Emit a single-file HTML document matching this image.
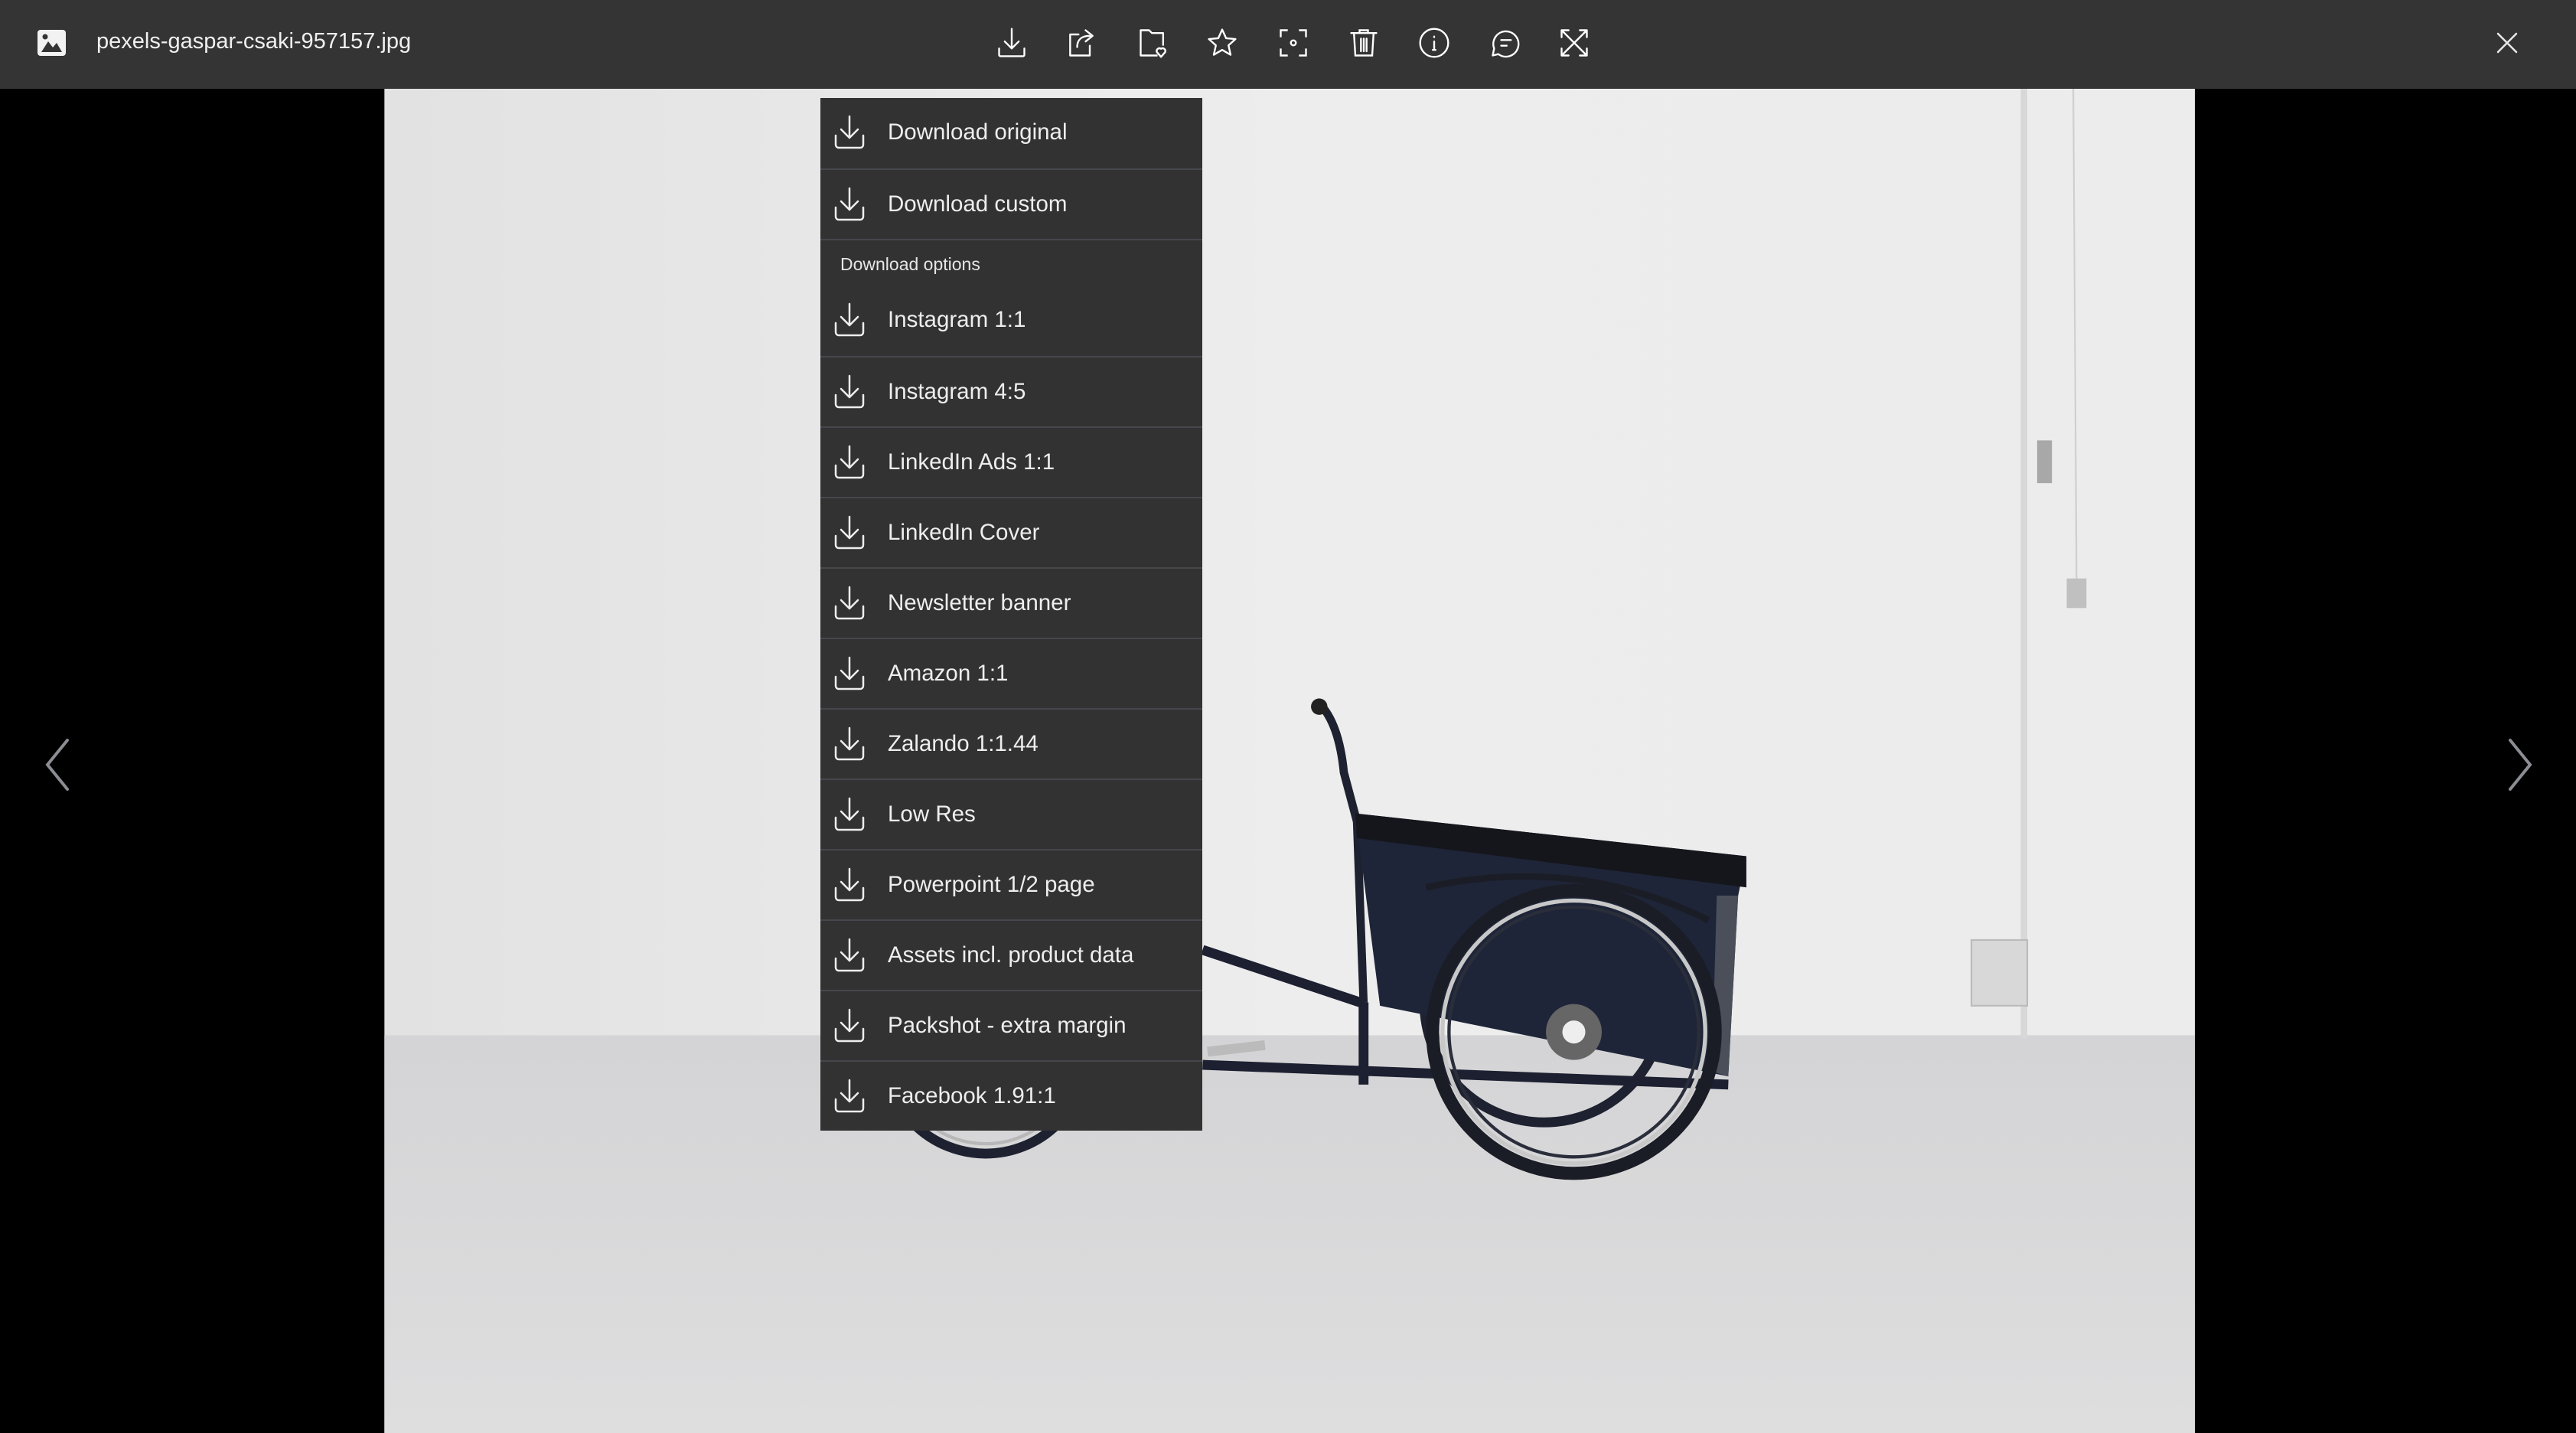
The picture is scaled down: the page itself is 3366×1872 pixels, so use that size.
<!DOCTYPE html>
<html><head><meta charset="utf-8"><style>
*{margin:0;padding:0;box-sizing:border-box}
body{width:3366px;height:1872px;background:#000;position:relative;overflow:hidden;font-family:"Liberation Sans",sans-serif}
.hdr{position:absolute;left:0;top:0;width:3366px;height:116px;background:#343434}
.fn{position:absolute;left:126px;top:36px;font-size:29px;color:#f0f0f0;line-height:36px}
.tb{position:absolute;top:34px;width:44px;height:44px}
.menu{position:absolute;left:1072px;top:128px;width:499px;background:#323232}
.row{height:92px;border-top:2px solid #45474c;position:relative;color:#eee;font-size:29.5px}
.row:first-child{border-top:none}
.row svg{position:absolute;left:18px;top:22px}
.row span{position:absolute;left:88px;top:27px;line-height:36px}
.sec{height:61px;border-top:2px solid #45474c;color:#e6e6e6;font-size:23px;padding:18px 0 0 26px}
.sec + .row{border-top:none}
</style></head><body>
<svg style="position:absolute;left:0;top:0" width="3366" height="1872" viewBox="0 0 1568 872">
<defs><linearGradient id="w" x1="0" x2="1"><stop offset="0" stop-color="#e2e2e2"/><stop offset=".5" stop-color="#ededed"/><stop offset="1" stop-color="#ececec"/></linearGradient>
<linearGradient id="f" y1="0" y2="1" x1="0" x2="0"><stop offset="0" stop-color="#d4d4d6"/><stop offset="1" stop-color="#dededf"/></linearGradient></defs>
<rect x="234" y="54" width="1102" height="818" fill="url(#w)"/>
<rect x="234" y="630" width="1102" height="242" fill="url(#f)"/>
<rect x="1230" y="54" width="4" height="578" fill="#d8d8d8"/>
<line x1="1262" y1="54" x2="1264" y2="355" stroke="#cfcfcf" stroke-width="1"/>
<rect x="1240" y="268" width="9" height="26" fill="#a8a8a8"/>
<rect x="1258" y="352" width="12" height="18" fill="#c0c0c0"/>
<rect x="1200" y="572" width="34" height="40" fill="#d8d8d8" stroke="#bbb"/>
<circle cx="600" cy="640" r="62" fill="none" stroke="#1e2130" stroke-width="6"/>
<circle cx="600" cy="640" r="56" fill="none" stroke="#b8b8b8" stroke-width="2"/>
<circle cx="940" cy="610" r="73" fill="none" stroke="#1e2130" stroke-width="6"/>
<path d="M732 578 L828 610 M732 648 L1052 660 M830 610 L830 660" stroke="#1d2030" stroke-width="6" fill="none"/>
<path d="M735 640 L770 636" stroke="#bbb" stroke-width="6"/>
<path d="M803 428 Q815 440 818 470 L826 500 L830 610" stroke="#1e2130" stroke-width="5" fill="none"/>
<circle cx="803" cy="430" r="5" fill="#222"/>
<path d="M825 495 L1063 521 L1058 545 L1052 655 L840 612 Z" fill="#1f2538"/>
<path d="M825 495 L1063 521 L1063 540 L826 510 Z" fill="#15161c"/>
<path d="M1045 545 L1058 545 L1052 655 L1042 652 Z" fill="#4a4f5a"/>
<circle cx="958" cy="628" r="86" fill="none" stroke="#1b1d26" stroke-width="8"/>
<circle cx="958" cy="628" r="80" fill="none" stroke="#c8c8c8" stroke-width="2.5"/>
<circle cx="958" cy="628" r="76" fill="none" stroke="#2a2e3a" stroke-width="2"/>
<circle cx="958" cy="628" r="17" fill="#666"/>
<circle cx="958" cy="628" r="7" fill="#eee"/>
<path d="M868 540 Q960 520 1040 560" stroke="#1b1d26" stroke-width="4" fill="none"/>
</svg>
<div class="hdr">
<svg style="position:absolute;left:49px;top:39px" width="37" height="34" viewBox="0 0 37 34"><rect x="0" y="0" width="37" height="34" rx="4" fill="#f2f2f2"/><circle cx="10" cy="9" r="3.5" fill="#343434"/><path d="M5 29 L14 15 L20 23 L25 17 L32 29 Z" fill="#343434"/></svg>
<div class="fn">pexels-gaspar-csaki-957157.jpg</div>
<svg class="tb" style="left:1300px" viewBox="0 0 24 24" fill="none" stroke="#fff" stroke-width="1.3" stroke-linecap="round" stroke-linejoin="round"><path d="M12 2v14M7 11l5 5 5-5M3 16v4.5a1 1 0 0 0 1 1h16a1 1 0 0 0 1-1V16"/></svg>
<svg class="tb" style="left:1391px" viewBox="0 0 24 24" fill="none" stroke="#fff" stroke-width="1.3" stroke-linecap="round" stroke-linejoin="round"><path d="M10 6H4v15h14v-7M9 15c0-5 3-8 9-8M15 3l5 4-5 4"/></svg>
<svg class="tb" style="left:1485px" viewBox="0 0 24 24" fill="none" stroke="#fff" stroke-width="1.3" stroke-linejoin="round"><path d="M15 21H3V3h6l2 2h8v9M17.5 22l-3-3.5a2 2 0 0 1 3-2.3 2 2 0 0 1 3 2.3z"/></svg>
<svg class="tb" style="left:1575px" viewBox="0 0 24 24" fill="none" stroke="#fff" stroke-width="1.3" stroke-linejoin="round"><path d="M12 2.5l2.8 6.2 6.7.6-5 4.5 1.5 6.7L12 17l-6 3.5 1.5-6.7-5-4.5 6.7-.6z"/></svg>
<svg class="tb" style="left:1668px" viewBox="0 0 24 24" fill="none" stroke="#fff" stroke-width="1.3"><path d="M8 3H3v5M16 3h5v5M3 16v5h5M21 16v5h-5"/><circle cx="12" cy="12" r="1.8"/></svg>
<svg class="tb" style="left:1760px" viewBox="0 0 24 24" fill="none" stroke="#fff" stroke-width="1.3" stroke-linecap="round"><path d="M3 5h18M9 5V3h6v2M5 5l1 16h12l1-16M10 9v9M12 9v9M14 9v9"/></svg>
<svg class="tb" style="left:1852px" viewBox="0 0 24 24" fill="none" stroke="#fff" stroke-width="1.3" stroke-linecap="round"><circle cx="12" cy="12" r="10"/><path d="M12 11v6M11 17h2M12 7.5v.5"/></svg>
<svg class="tb" style="left:1945px" viewBox="0 0 24 24" fill="none" stroke="#fff" stroke-width="1.3" stroke-linecap="round" stroke-linejoin="round"><path d="M7 20a9 9 0 1 0-3-4l-1 5z"/><path d="M9 10h7M9 14h4"/></svg>
<svg class="tb" style="left:2035px" viewBox="0 0 24 24" fill="none" stroke="#fff" stroke-width="1.3" stroke-linecap="round"><path d="M3 3l18 18M21 3L3 21M3 3h5M3 3v5M21 3h-5M21 3v5M3 21h5M3 21v-5M21 21h-5M21 21v-5"/></svg>
<svg style="position:absolute;left:3262px;top:42px" width="28" height="28" viewBox="0 0 28 28" stroke="#e8e8e8" stroke-width="2.5" stroke-linecap="round"><path d="M2 2L26 26M26 2L2 26"/></svg>
</div>
<svg style="position:absolute;left:58px;top:963px" width="34" height="72" viewBox="0 0 34 72" fill="none" stroke="#8b8d93" stroke-width="4" stroke-linecap="round"><path d="M30 4L4 36l26 32"/></svg>
<svg style="position:absolute;left:3276px;top:963px" width="34" height="72" viewBox="0 0 34 72" fill="none" stroke="#8b8d93" stroke-width="4" stroke-linecap="round"><path d="M4 4l26 32L4 68"/></svg>
<div class="menu">
<div class="row"><svg width="40" height="46" viewBox="0 0 40 46" fill="none" stroke="#eee" stroke-width="2.5" stroke-linecap="round" stroke-linejoin="round"><path d="M20 2v28M9 19l11 11 11-11M2 27v12a4 4 0 0 0 4 4h28a4 4 0 0 0 4-4V27"/></svg><span>Download original</span></div>
<div class="row"><svg width="40" height="46" viewBox="0 0 40 46" fill="none" stroke="#eee" stroke-width="2.5" stroke-linecap="round" stroke-linejoin="round"><path d="M20 2v28M9 19l11 11 11-11M2 27v12a4 4 0 0 0 4 4h28a4 4 0 0 0 4-4V27"/></svg><span>Download custom</span></div>
<div class="sec">Download options</div>
<div class="row"><svg width="40" height="46" viewBox="0 0 40 46" fill="none" stroke="#eee" stroke-width="2.5" stroke-linecap="round" stroke-linejoin="round"><path d="M20 2v28M9 19l11 11 11-11M2 27v12a4 4 0 0 0 4 4h28a4 4 0 0 0 4-4V27"/></svg><span>Instagram 1:1</span></div>
<div class="row"><svg width="40" height="46" viewBox="0 0 40 46" fill="none" stroke="#eee" stroke-width="2.5" stroke-linecap="round" stroke-linejoin="round"><path d="M20 2v28M9 19l11 11 11-11M2 27v12a4 4 0 0 0 4 4h28a4 4 0 0 0 4-4V27"/></svg><span>Instagram 4:5</span></div>
<div class="row"><svg width="40" height="46" viewBox="0 0 40 46" fill="none" stroke="#eee" stroke-width="2.5" stroke-linecap="round" stroke-linejoin="round"><path d="M20 2v28M9 19l11 11 11-11M2 27v12a4 4 0 0 0 4 4h28a4 4 0 0 0 4-4V27"/></svg><span>LinkedIn Ads 1:1</span></div>
<div class="row"><svg width="40" height="46" viewBox="0 0 40 46" fill="none" stroke="#eee" stroke-width="2.5" stroke-linecap="round" stroke-linejoin="round"><path d="M20 2v28M9 19l11 11 11-11M2 27v12a4 4 0 0 0 4 4h28a4 4 0 0 0 4-4V27"/></svg><span>LinkedIn Cover</span></div>
<div class="row"><svg width="40" height="46" viewBox="0 0 40 46" fill="none" stroke="#eee" stroke-width="2.5" stroke-linecap="round" stroke-linejoin="round"><path d="M20 2v28M9 19l11 11 11-11M2 27v12a4 4 0 0 0 4 4h28a4 4 0 0 0 4-4V27"/></svg><span>Newsletter banner</span></div>
<div class="row"><svg width="40" height="46" viewBox="0 0 40 46" fill="none" stroke="#eee" stroke-width="2.5" stroke-linecap="round" stroke-linejoin="round"><path d="M20 2v28M9 19l11 11 11-11M2 27v12a4 4 0 0 0 4 4h28a4 4 0 0 0 4-4V27"/></svg><span>Amazon 1:1</span></div>
<div class="row"><svg width="40" height="46" viewBox="0 0 40 46" fill="none" stroke="#eee" stroke-width="2.5" stroke-linecap="round" stroke-linejoin="round"><path d="M20 2v28M9 19l11 11 11-11M2 27v12a4 4 0 0 0 4 4h28a4 4 0 0 0 4-4V27"/></svg><span>Zalando 1:1.44</span></div>
<div class="row"><svg width="40" height="46" viewBox="0 0 40 46" fill="none" stroke="#eee" stroke-width="2.5" stroke-linecap="round" stroke-linejoin="round"><path d="M20 2v28M9 19l11 11 11-11M2 27v12a4 4 0 0 0 4 4h28a4 4 0 0 0 4-4V27"/></svg><span>Low Res</span></div>
<div class="row"><svg width="40" height="46" viewBox="0 0 40 46" fill="none" stroke="#eee" stroke-width="2.5" stroke-linecap="round" stroke-linejoin="round"><path d="M20 2v28M9 19l11 11 11-11M2 27v12a4 4 0 0 0 4 4h28a4 4 0 0 0 4-4V27"/></svg><span>Powerpoint 1/2 page</span></div>
<div class="row"><svg width="40" height="46" viewBox="0 0 40 46" fill="none" stroke="#eee" stroke-width="2.5" stroke-linecap="round" stroke-linejoin="round"><path d="M20 2v28M9 19l11 11 11-11M2 27v12a4 4 0 0 0 4 4h28a4 4 0 0 0 4-4V27"/></svg><span>Assets incl. product data</span></div>
<div class="row"><svg width="40" height="46" viewBox="0 0 40 46" fill="none" stroke="#eee" stroke-width="2.5" stroke-linecap="round" stroke-linejoin="round"><path d="M20 2v28M9 19l11 11 11-11M2 27v12a4 4 0 0 0 4 4h28a4 4 0 0 0 4-4V27"/></svg><span>Packshot - extra margin</span></div>
<div class="row"><svg width="40" height="46" viewBox="0 0 40 46" fill="none" stroke="#eee" stroke-width="2.5" stroke-linecap="round" stroke-linejoin="round"><path d="M20 2v28M9 19l11 11 11-11M2 27v12a4 4 0 0 0 4 4h28a4 4 0 0 0 4-4V27"/></svg><span>Facebook 1.91:1</span></div>
</div>
</body></html>
